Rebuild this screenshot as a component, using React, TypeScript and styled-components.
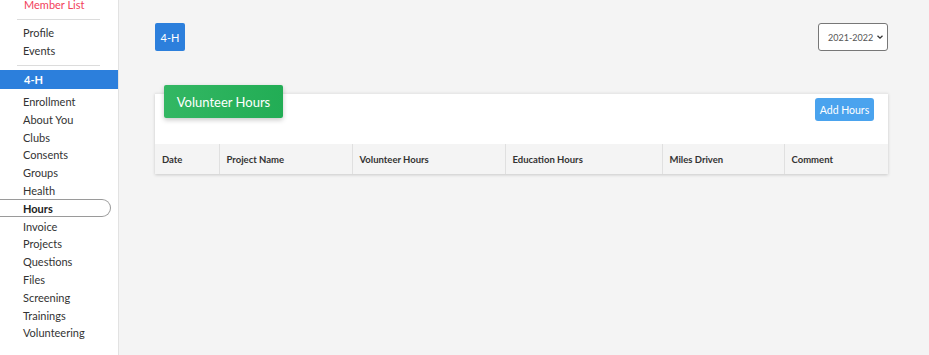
import React from 'react';
import styled, {createGlobalStyle} from 'styled-components';

const GlobalStyle = createGlobalStyle`
  html, body {
    margin: 0;
    padding: 0;
    height: 100%;
    background: #f4f4f4;
    font-family: Lato, "Open Sans", sans-serif;
  }
  #root {
    height: 100%;
  }
`;

const sideItems = [
    'Enrollment', 'About You', 'Clubs', 'Consents', 'Groups', 'Health', 'Hours',
    'Invoice', 'Projects', 'Questions', 'Files', 'Screening', 'Trainings', 'Volunteering',
];

const columns = [
    {title: 'Date', width: 64},
    {title: 'Project Name', width: 133},
    {title: 'Volunteer Hours', width: 153},
    {title: 'Education Hours', width: 157},
    {title: 'Miles Driven', width: 122},
    {title: 'Comment', width: 0},
];

export default function App() {

    return (
        <Layout>
            <GlobalStyle/>
            <Sidebar>
                <SideList>
                    <TopLink>Member List</TopLink>
                    <Divider/>
                    <SideLink>Profile</SideLink>
                    <SideLink>Events</SideLink>
                    <Divider/>
                    <SectionTitle>4-H</SectionTitle>
                    {sideItems.map((item) => (
                        <SideLink key={item} active={item === 'Hours'}>{item}</SideLink>
                    ))}
                </SideList>
            </Sidebar>
            <Main>
                <TopBar>
                    <ProgramButton>4-H</ProgramButton>
                    <YearSelect>
                        <span>2021-2022</span>
                        <svg width="8" height="8" viewBox="0 0 8 8">
                            <path d="M1.5 2.8 L4 5.2 L6.5 2.8" fill="none" stroke="#333" strokeWidth="1.3"/>
                        </svg>
                    </YearSelect>
                </TopBar>
                <Card>
                    <CardHeader>
                        <Badge>Volunteer Hours</Badge>
                        <AddButton>Add Hours</AddButton>
                    </CardHeader>
                    <Table>
                        <thead>
                            <tr>
                                {columns.map((c) => (
                                    <Th key={c.title} style={c.width ? {width: c.width} : undefined}>{c.title}</Th>
                                ))}
                            </tr>
                        </thead>
                    </Table>
                </Card>
            </Main>
        </Layout>
    );

}

const Layout = styled.div`
  display: flex;
  height: 355px;
  overflow: hidden;
`;

const Sidebar = styled.nav`
  width: 118px;
  flex-shrink: 0;
  background: #fff;
  border-right: 1px solid #e2e2e2;
  overflow: hidden;
`;

const SideList = styled.div`
  display: flex;
  flex-direction: column;
  margin-top: -4px;
`;

const TopLink = styled.div`
  padding-left: 24px;
  font-size: 11px;
  line-height: 18px;
  color: #f2415b;
`;

const Divider = styled.hr`
  border: 0;
  border-top: 1px solid #dcdcdc;
  margin: 5px 17px 4px 17px;
  width: 83px;
  height: 0;
`;

const SideLink = styled.div<{ active?: boolean }>`
  box-sizing: border-box;
  display: flex;
  align-items: center;
  height: 17.8px;
  padding-left: 23px;
  margin-right: 7px;
  font-size: 11px;
  color: ${(p) => (p.active ? '#222' : '#333')};
  border: 1px solid ${(p) => (p.active ? '#9a9a9a' : 'transparent')};
  border-left: 0;
  border-radius: 0 9px 9px 0;
  font-weight: ${(p) => (p.active ? 700 : 400)};
`;

const SectionTitle = styled.div`
  background: #2c7fdc;
  color: #fff;
  font-weight: 700;
  font-size: 11px;
  line-height: 19px;
  padding-left: 24px;
  margin-bottom: 4px;
`;

const Main = styled.main`
  flex: 1;
  padding: 23px 41px 0 36px;
  display: flex;
  flex-direction: column;
`;

const TopBar = styled.div`
  display: flex;
  justify-content: space-between;
  align-items: flex-start;
`;

const ProgramButton = styled.button`
  width: 30px;
  height: 28px;
  padding: 0;
  border: 0;
  border-radius: 2px;
  background: #2c7fdc;
  color: #fff;
  font-family: Lato, sans-serif;
  font-size: 11px;
`;

const YearSelect = styled.div`
  box-sizing: border-box;
  width: 70px;
  height: 28px;
  border: 1px solid #777;
  border-radius: 3px;
  background: #fff;
  color: #555;
  font-size: 9px;
  white-space: nowrap;
  padding: 0 3px 0 9px;
  display: flex;
  align-items: center;
  justify-content: space-between;
`;

const Card = styled.section`
  margin-top: 42px;
  background: #fff;
  box-shadow: 0 1px 3px rgba(0, 0, 0, 0.18);
  border-top: 1px solid #e8e8e8;
`;

const CardHeader = styled.div`
  display: flex;
  justify-content: space-between;
  align-items: flex-start;
  height: 50px;
  padding: 0 14px 0 9px;
`;

const Badge = styled.div`
  margin-top: -9px;
  width: 119px;
  height: 33px;
  display: flex;
  align-items: center;
  justify-content: center;
  background: linear-gradient(90deg, #33b763 0%, #22ad55 100%);
  color: #fff;
  font-size: 13px;
  border-radius: 2px;
  box-shadow: 0 2px 5px rgba(0, 0, 0, 0.22);
`;

const AddButton = styled.button`
  margin-top: 4px;
  width: 59px;
  height: 23px;
  border: 0;
  border-radius: 3px;
  background: #4aa3ee;
  color: #fff;
  font-family: Lato, sans-serif;
  font-size: 10.5px;
  padding: 0;
`;

const Table = styled.table`
  width: 100%;
  border-collapse: collapse;
  table-layout: fixed;
`;

const Th = styled.th`
  box-sizing: border-box;
  background: #f4f4f4;
  height: 30px;
  padding: 0 7px;
  text-align: left;
  font-size: 9.5px;
  font-weight: 700;
  color: #333;
  border-right: 1px solid #e0e0e0;

  &:last-child {
    border-right: 0;
  }
`;
